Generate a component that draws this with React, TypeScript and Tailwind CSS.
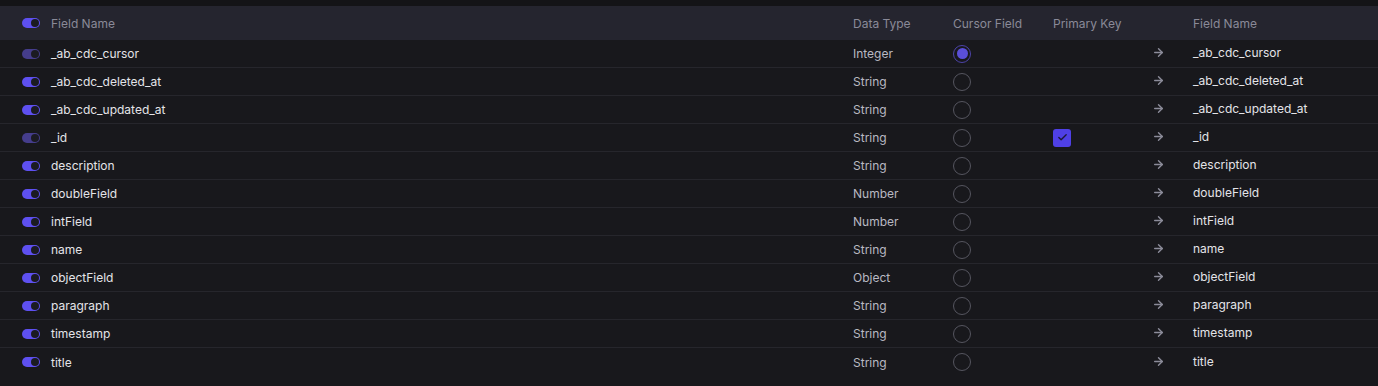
import { ArrowRight, Check } from "lucide-react";

type Field = {
  name: string;
  type: string;
  cursor?: boolean;
  pk?: boolean;
  locked?: boolean;
};

const fields: Field[] = [
  { name: "_ab_cdc_cursor", type: "Integer", cursor: true, locked: true },
  { name: "_ab_cdc_deleted_at", type: "String" },
  { name: "_ab_cdc_updated_at", type: "String" },
  { name: "_id", type: "String", pk: true, locked: true },
  { name: "description", type: "String" },
  { name: "doubleField", type: "Number" },
  { name: "intField", type: "Number" },
  { name: "name", type: "String" },
  { name: "objectField", type: "Object" },
  { name: "paragraph", type: "String" },
  { name: "timestamp", type: "String" },
  { name: "title", type: "String" },
];

function Toggle({ dim }: { dim?: boolean }) {
  return (
    <div
      className={`w-[18px] h-[10px] rounded-full flex items-center justify-end pr-[1px] ${
        dim ? "bg-[#453d8c]" : "bg-[#5e50f0]"
      }`}
    >
      <div className="w-[8px] h-[8px] rounded-full bg-[#1b1b22]" />
    </div>
  );
}

function Radio({ on }: { on?: boolean }) {
  return on ? (
    <div className="w-[18px] h-[18px] rounded-full border border-[#4c43a8] flex items-center justify-center">
      <div className="w-[11px] h-[11px] rounded-full bg-[#5a4fd8]" />
    </div>
  ) : (
    <div className="w-[18px] h-[18px] rounded-full border border-[#55555f]" />
  );
}

// toggle | name | type | cursor | pk | arrow | dest name
const grid = "grid grid-cols-[51px_802px_100px_100px_99px_41px_1fr] items-center";

export default function App() {
  return (
    <div
      className="w-[1378px] h-[386px] bg-[#18181c] text-[12px] overflow-hidden"
      style={{ fontFamily: "Inter, 'Noto Sans', sans-serif" }}
    >
      <div className="h-[6px] bg-[#141417]" />
      {/* header */}
      <div className={`${grid} h-[34px] bg-[#25252f] text-[#8a8a98]`}>
        <div className="pl-[22px]">
          <Toggle />
        </div>
        <div className="pt-[1px]">Field Name</div>
        <div className="pt-[1px]">Data Type</div>
        <div className="pt-[1px]">Cursor Field</div>
        <div className="pt-[1px]">Primary Key</div>
        <div />
        <div className="pt-[1px]">Field Name</div>
      </div>

      {fields.map((f, i) => (
        <div
          key={f.name}
          className={`${grid} h-[28px] ${
            i < fields.length - 1 ? "border-b border-[#26262c]" : ""
          }`}
        >
          <div className="pl-[22px]">
            <Toggle dim={f.locked} />
          </div>
          <div className="text-[#e4e4e8] pt-[1px]">{f.name}</div>
          <div className="text-[#b9b9c2] pt-[1px]">{f.type}</div>
          <div>
            <Radio on={f.cursor} />
          </div>
          <div className="flex items-center">
            {f.pk && (
              <div className="w-[18px] h-[18px] rounded-[3px] bg-[#4f40e6] flex items-center justify-center">
                <Check size={11} strokeWidth={3} className="text-[#1c1838]" />
              </div>
            )}
          </div>
          <div className="flex items-center -mt-[2px]">
            <ArrowRight size={13} strokeWidth={2.6} className="text-[#8c8c9a]" />
          </div>
          <div className="text-[#e4e4e8] -mt-[1px]">{f.name}</div>
        </div>
      ))}
    </div>
  );
}
